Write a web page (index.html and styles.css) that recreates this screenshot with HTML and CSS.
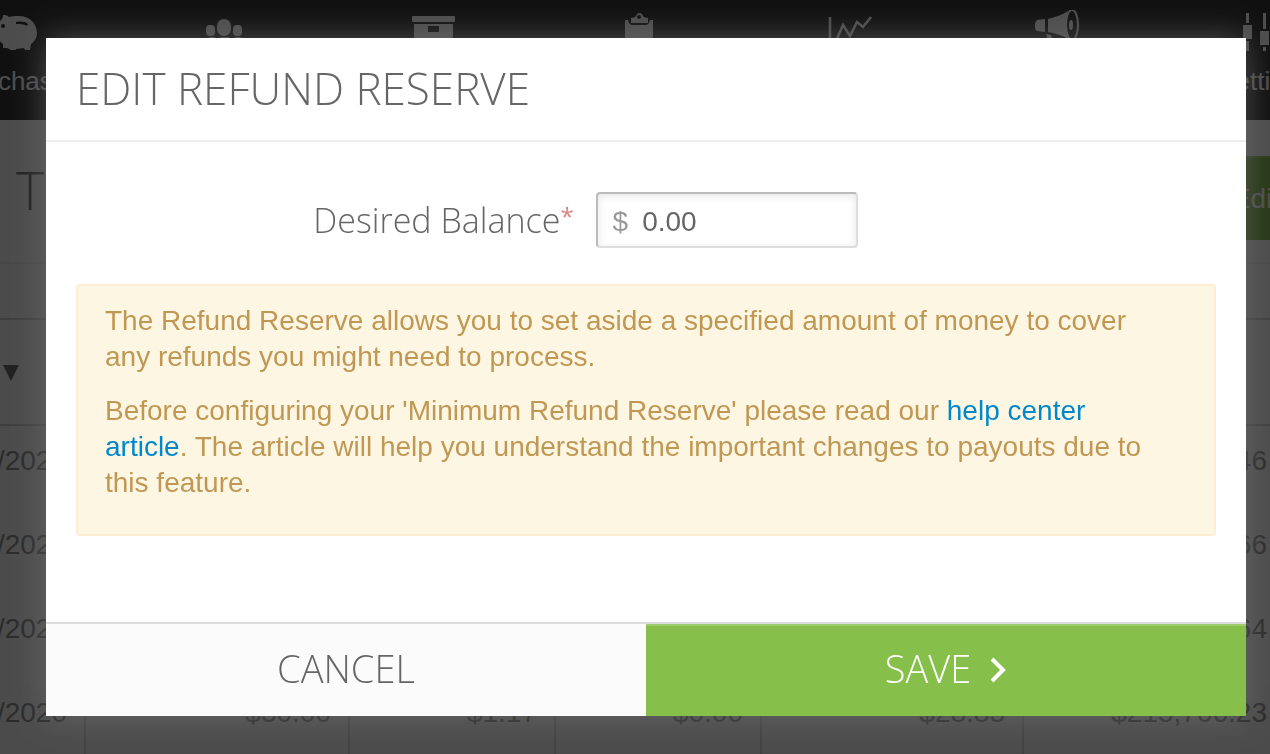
FILE: index.html
```html
<!DOCTYPE html>
<html lang="en">
<head>
    <meta charset="UTF-8">
    <meta name="viewport" content="width=device-width, initial-scale=1.0">
    <link rel="stylesheet" href="styles.css">
    <title>Transactions</title>
</head>
<body>
    <div class="page">
        <nav class="main-nav">
            <a class="nav-item" href="#">
                <svg width="44" height="44" viewBox="0 0 44 44" fill="#fff">
                    <path d="M6 5c2 0 4 0 6 2 3-1 6-1 10-1 10 0 18 7 18 17 0 5-3 9-6 11l-1 6h-5l-1-2-8 1v1h-5l-2-1-2-1H6v-4c-3-2-5-5-6-9v-9l3-5c2-2 3-3 3-6z"/>
                    <path class="nav-cut" d="M19 12c4-1 9-1 12 2l-1 2c-4-2-7-2-11-2z"/>
                    <circle class="nav-cut" cx="6" cy="16" r="2"/>
                </svg>
                <span>Purchases</span>
            </a>
            <a class="nav-item" href="#">
                <svg width="44" height="44" viewBox="2 0 44 44" fill="#fff">
                    <rect x="14" y="9" width="14" height="17" rx="7"/>
                    <rect x="3" y="15" width="9" height="11" rx="4"/>
                    <rect x="30" y="15" width="9" height="11" rx="4"/>
                    <path d="M1 38c0-7 2-11 8-11 3 0 5 1 5 3 2-2 4-3 8-3s6 1 8 3c0-2 2-3 5-3 6 0 8 4 8 11z"/>
                </svg>
            </a>
            <a class="nav-item" href="#">
                <svg width="44" height="44" viewBox="0 0 44 44" fill="#fff">
                    <rect y="6" width="43" height="6" rx="1"/>
                    <path fill-rule="evenodd" d="M2 14h39v26H2zM16 16v6h11v-6z"/>
                </svg>
            </a>
            <a class="nav-item" href="#">
                <svg width="44" height="44" viewBox="2 0 44 44" fill="#fff">
                    <path d="M7 10h3c1 4 2 5 5 5h12c3 0 4-1 5-5h3v32H7z"/>
                    <path fill-rule="evenodd" d="M13 13V8c3 0 4-1 5-2 1-4 6-4 7 0 1 1 2 2 5 2v5zM21 5a2 2 0 1 0 0 4 2 2 0 0 0 0-4z"/>
                </svg>
            </a>
            <a class="nav-item" href="#">
                <svg width="44" height="44" viewBox="0 0 44 44" fill="none" stroke="#fff" stroke-width="2.5">
                    <path d="M2 7v35h40"/>
                    <path d="M8 31l7-16 7 11 7-14 6 5 8-10"/>
                </svg>
            </a>
            <a class="nav-item" href="#">
                <svg width="44" height="44" viewBox="0 0 44 44" fill="#fff">
                    <path d="M10 9L2 10c-3 3-3 9 0 11l8 1zM13 9c7-2 14-4 20-8 -3 8-3 20 0 28-6-4-13-6-20-7z"/>
                    <ellipse cx="37" cy="15" rx="6" ry="15" fill="none" stroke="#fff" stroke-width="2"/>
                    <ellipse cx="36" cy="15" rx="2" ry="5"/>
                    <path d="M11 24l5 1 4 12h-5z"/>
                </svg>
            </a>
            <a class="nav-item" href="#">
                <svg width="44" height="44" viewBox="2 0 44 44" fill="#fff">
                    <path d="M5 3h3v10H5zM2 15h9v14H2zM5 31h3v10H5zM22 3h3v16h-3zM19 21h9v14h-9zM22 37h3v4h-3zM38 3h3v7h-3zM35 12h9v13h-9zM38 27h3v14h-3z"/>
                </svg>
                <span>Settings</span>
            </a>
        </nav>

        <header class="page-header">
            <h1>Transactions</h1>
            <button class="edit-button" type="button">Edit</button>
        </header>

        <div class="filter-bar"></div>

        <table class="transactions">
            <thead>
                <tr>
                    <th class="col-date"><span class="sort-arrow"></span></th>
                    <th class="col-total"></th>
                    <th class="col-fee"></th>
                    <th class="col-fee"></th>
                    <th class="col-net"></th>
                    <th class="col-balance"></th>
                </tr>
            </thead>
            <tbody>
                <tr><td>01/23/2020</td><td></td><td></td><td></td><td></td><td>$215,813.46</td></tr>
                <tr><td>01/23/2020</td><td></td><td></td><td></td><td></td><td>$215,789.66</td></tr>
                <tr><td>01/22/2020</td><td></td><td></td><td></td><td></td><td>$215,735.64</td></tr>
                <tr><td>01/22/2020</td><td>$30.00</td><td>$1.17</td><td>$0.00</td><td>$28.83</td><td>$215,706.23</td></tr>
            </tbody>
        </table>
    </div>

    <div class="backdrop">
        <form class="modal" role="dialog" aria-labelledby="modal-title">
            <div class="modal-header">
                <h2 id="modal-title">EDIT REFUND RESERVE</h2>
            </div>
            <div class="modal-body">
                <div class="field">
                    <label for="balance">Desired Balance<span class="required">*</span></label>
                    <div class="money-input">
                        <span>$</span>
                        <input type="text" id="balance" value="0.00">
                    </div>
                </div>
                <div class="alert">
                    <p>The Refund Reserve allows you to set aside a specified amount of money to cover any refunds you might need to process.</p>
                    <p>Before configuring your 'Minimum Refund Reserve' please read our <a href="#">help center article</a>. The article will help you understand the important changes to payouts due to this feature.</p>
                </div>
            </div>
            <div class="modal-footer">
                <button class="cancel" type="button">CANCEL</button>
                <button class="save" type="submit">
                    SAVE
                    <svg width="18" height="30" viewBox="0 0 18 30" fill="none" stroke="#fff" stroke-width="4">
                        <path d="M3 6l11 11L3 28"/>
                    </svg>
                </button>
            </div>
        </form>
    </div>
</body>
</html>
```

FILE: styles.css
```css
* {
    box-sizing: border-box;
}

body {
    margin: 0;
    font-family: "Liberation Sans", Arial, sans-serif;
    font-size: 28px;
    color: #666;
}

h1, h2, p {
    margin: 0;
}

/* page behind the dialog */
.page {
    height: 100vh;
    overflow: hidden;
    background: #fafafa;
}

.main-nav {
    display: flex;
    height: 120px;
    margin: 0 -99px 0 -85px;
    padding-top: 10px;
    background: #373737;
}

.nav-item {
    flex: 1;
    display: flex;
    flex-direction: column;
    align-items: center;
    gap: 11px;
    color: #fff;
    font-size: 26px;
    line-height: 32px;
    text-decoration: none;
}

.nav-cut {
    fill: #373737;
}

.page-header {
    display: flex;
    justify-content: space-between;
    align-items: flex-start;
    height: 144px;
    padding: 36px 0 0 16px;
    border-bottom: 2px solid #eee;
}

h1 {
    font-family: "Open Sans", sans-serif;
    font-size: 54px;
    font-weight: 300;
    line-height: 66px;
    color: #717171;
}

.edit-button {
    height: 84px;
    margin-right: -42px;
    padding: 0 32px;
    border: 0;
    border-top: 2px solid #8fc25c;
    background: #7fb546;
    color: #fff;
    font-family: inherit;
    font-size: 28px;
}

.filter-bar {
    height: 54px;
}

.transactions {
    width: calc(100% + 102px);
    margin-left: -86px;
    border-collapse: collapse;
    table-layout: fixed;
}

.transactions th {
    height: 106px;
    padding: 0 66px 0 0;
    border-top: 2px solid #d4d4d4;
    border-bottom: 2px solid #d4d4d4;
    text-align: right;
}

.transactions td {
    height: 84px;
    padding: 15px 17px 29px 0;
    border-right: 2px solid #d9d9d9;
    font-size: 28px;
    line-height: 40px;
    text-align: right;
    color: #919191;
}

.col-date {
    width: 171px;
}

.col-total {
    width: 264px;
}

.col-fee {
    width: 206px;
}

.col-net {
    width: 262px;
}

.sort-arrow {
    display: inline-block;
    border: 8px solid transparent;
    border-top: 16px solid #717171;
    border-bottom: 0;
}

/* dialog */
.backdrop {
    position: fixed;
    inset: 0;
    padding: 38px 24px 38px 46px;
    background: rgba(0, 0, 0, 0.7);
}

.modal {
    background: #fff;
    box-shadow: 0 0 32px rgba(123, 123, 123, 0.6);
}

.modal-header {
    padding: 24px 30px 26px;
    border-bottom: 2px solid #eee;
}

h2 {
    font-family: "Open Sans", sans-serif;
    font-size: 44px;
    font-weight: 300;
    line-height: 52px;
}

.modal-body {
    padding: 50px 30px 86px;
}

.field {
    display: flex;
    align-items: center;
    margin-bottom: 36px;
}

.field label {
    width: 44%;
    padding-right: 4px;
    font-family: "Open Sans", sans-serif;
    font-size: 34px;
    font-weight: 300;
    line-height: 56px;
    text-align: right;
}

.required {
    color: #d98080;
    font-size: 24px;
    font-weight: 400;
    line-height: 24px;
    vertical-align: 8px;
}

.money-input {
    display: flex;
    align-items: center;
    gap: 14px;
    width: 262px;
    height: 56px;
    margin-left: 18px;
    padding: 4px 15px 0;
    border: 2px solid #ddd;
    border-top-color: #bbb;
    border-left-color: #bbb;
    border-radius: 4px;
    box-shadow: inset 0 2px 8px rgba(0, 0, 0, 0.1);
    color: #999;
}

.money-input input {
    flex: 1;
    min-width: 0;
    padding: 0;
    border: 0;
    outline: 0;
    background: transparent;
    color: #666;
    font: inherit;
}

.alert {
    padding: 17px 70px 15px 27px;
    border: 2px solid #fbeed5;
    border-radius: 4px;
    background: #fdf6e3;
    color: #c09853;
    line-height: 36px;
}

.alert p {
    margin-bottom: 18px;
}

.alert a {
    color: #08c;
    text-decoration: none;
}

.modal-footer {
    display: flex;
    border-top: 2px solid #ddd;
}

.modal-footer button {
    flex: 1;
    display: flex;
    justify-content: center;
    align-items: center;
    gap: 18px;
    height: 92px;
    padding: 0 0 4px;
    border: 0;
    font-family: "Open Sans", sans-serif;
    font-size: 38px;
    font-weight: 300;
}

.modal-footer .cancel {
    background: #fbfbfb;
    color: #666;
}

.modal-footer .save {
    background: #86c04a;
    box-shadow: inset 0 2px #9dcc6d;
    color: #fff;
}
```
